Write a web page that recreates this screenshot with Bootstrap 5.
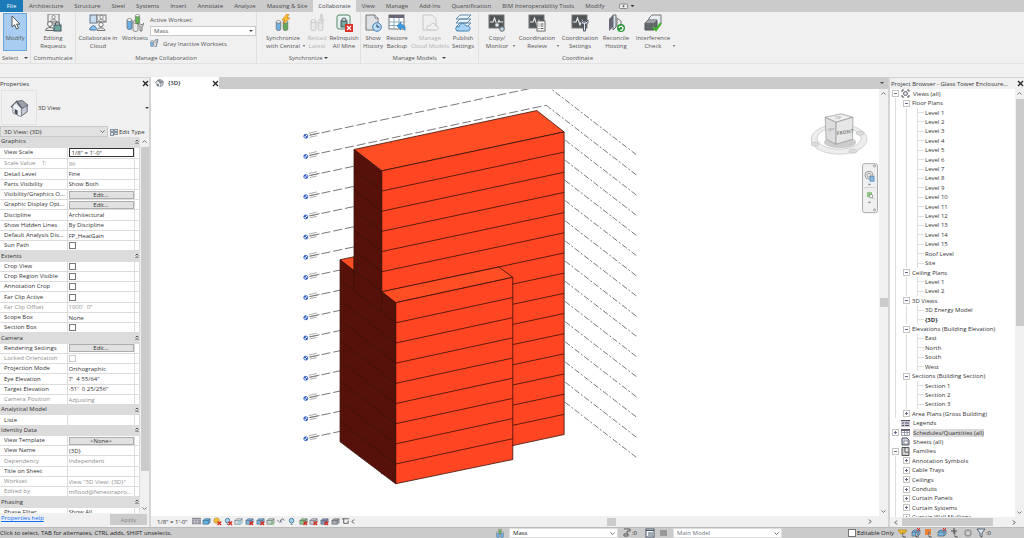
<!DOCTYPE html>
<html lang="en">
<head>
<meta charset="utf-8">
<meta name="viewport" content="width=device-width, initial-scale=1">
<title>Glass Tower Enclosure - 3D View</title>
<link href="https://cdn.jsdelivr.net/npm/bootstrap@5.3.0/dist/css/bootstrap.min.css" rel="stylesheet">
<style>
:root{--bar:#cbcbcb;--face:#f0f0f0;--edge:#d4d4d4;--ink:#333;--mute:#8e8e8e}
body{font-family:"Open Sans","Noto Sans",sans-serif;font-size:6px;line-height:8px;color:var(--ink);background:var(--face);white-space:nowrap}
button,input,select{font:inherit;color:inherit}
button{background:none;border:0;padding:0}
.app{height:100vh;overflow:hidden}
.tabs{background:var(--bar);height:12px;gap:1px}
.tabs button{padding:0 5px;height:12px;color:#4a4a4a}
.tabs .file{background:#1c7ab8;color:#fff;width:23px}
.tabs .on{background:var(--face)}
.ribbon{height:52px;border-bottom:1px solid #e2e2e2}
.grp{border-right:1px solid #e0e0e0;color:#555}
.grp footer{height:10px;line-height:10px;text-align:center}
.tool{height:41px;display:flex;flex-direction:column;align-items:center;padding-top:2px;position:relative;flex:none;white-space:nowrap}
.tool svg{width:18px;height:18px;display:block;margin-bottom:2px}
.tool .drop{position:absolute;right:0;bottom:6px}
.drop{display:inline-block;border:2px solid transparent;border-top-color:#444;border-bottom:0;vertical-align:middle}
.tool .drop{border-width:1px;border-bottom:0;border-top:2px solid #555}
.w-a{width:24px}.w-b{width:30px}.w-c{width:36px}.w-d{width:42px}.w-e{width:44px}
.modify{background:#a9cdf0;border:1px solid #6aa5dc;width:24px;height:38px;margin:1px 3px 2px;padding-top:0}
.ghost{opacity:.4}
.set-box{width:106px;padding:4px 0 0}
.set-box .pick{margin:2px 0 3px}
select{appearance:none;border:1px solid #c9c9c9;border-radius:0;background:#fff;padding:0 3px;height:10px;line-height:8px;width:100%;display:block}
.pick{position:relative}
.pick .drop,.pick .chev{position:absolute;right:3px;top:4px;pointer-events:none}
.chev{width:5px;height:3px;fill:none;stroke:#777;stroke-width:1;display:block}
.head{height:12px;line-height:12px;border-top:1px solid var(--edge);background:var(--face)}
.x{width:7px;height:7px;stroke:#222;stroke-width:1.3;fill:none;display:block}
.left{width:151px;border-right:2px solid var(--edge)}
.type{height:37px}
.type .thumb{width:36px;height:35px;border:1px solid #e2e2e2;margin:1px}
.sel{height:11px}
.sel .pick{width:108px}.sel select{background:#e1e1e1;height:11px}
.sel button{gap:1px;padding-left:2px}
.gridbox{overflow:hidden;background:#fff}
.props{width:140px;height:calc(100% + 5px);table-layout:fixed;border-collapse:collapse;line-height:7px}
.props td,.props th{padding:0 0 0 1px;border-bottom:1px solid #dcdcdc;border-right:1px solid #dcdcdc;overflow:hidden;font-weight:400;height:9px}
.props th[scope=row]{padding-left:4px}
.props .sec th{background:#dcdcdc;padding-left:1px}
.props .off{color:var(--mute)}
.props input[type=text]{border:0;width:100%;height:8px;padding:0;display:block;background:none;outline:0;text-overflow:ellipsis}
.props .boxed input{border:1px solid #333;height:9px;padding-left:2px}
.props .edit{width:100%;height:8px;background:#e1e1e1;border:1px solid #adadad;line-height:6px;display:block}
input[type=checkbox]{appearance:none;width:7px;height:7px;border:1px solid #777;background:#fff;margin:0;display:block}
input:disabled{border-color:#ccc;color:var(--mute)}
.vbar{width:9px;background:var(--face);display:flex;flex-direction:column;align-items:center;flex:none;padding:3px 0}
.vbar .track{width:8px}
.vbar i,.hbar i{display:block;background:var(--bar)}
.foot{height:14px;padding:1px 2px 1px 1px}
.foot button{width:37px;height:11px;background:#ccc;color:#888}
.viewtabs{height:12px;background:var(--bar)}
.viewtabs .cur{width:68px;background:#fff;font-weight:600}
.canvas{background:#fff;min-width:0;min-height:0}
.canvas svg{width:100%;height:100%;display:block}
.strip{height:11px;background:var(--face)}
.strip>span{padding:0 4px 0 6px}
.strip .ic{width:9px;height:9px;display:block}
.vctl{width:159px;display:flex;justify-content:space-between}
.right{width:136px;border-left:2px solid var(--edge)}
.right .head{padding-left:1px}
.tree{overflow:hidden;background:#fff;min-width:0}
.rows{height:calc(100% + 5px);display:grid;grid-auto-rows:1fr;margin:0;padding:0 0 0 2px;list-style:none}
.rows li{display:flex;align-items:center;min-height:0}
.rows b{font-weight:700}
.g{align-self:stretch;width:11px;flex:none;background:linear-gradient(#ddd,#ddd) 3px 0/1px 100% no-repeat}
.g.h{background:linear-gradient(#ddd,#ddd) 3px 0/1px 100% no-repeat,linear-gradient(#ddd,#ddd) 3px 50%/7px 1px no-repeat}
.pm{width:9px;height:9px;flex:none;display:block;margin-right:3px}
.tw{width:7px;height:7px;flex:none;margin-right:2px}
.hot{background:#d9d9d9}
.hbar{height:10px}
.hbar .bar{width:91px;height:8px}
.status{height:11px;background:var(--bar);border-top:1px solid #bbb;color:#222}
.status .pick{width:109px}
.status select{height:10px;border-color:#ddd}
.status .ic{width:10px;height:10px;display:block}
.tail{width:242px;padding-right:33px}
.tail input{width:8px;height:8px;margin-right:1px}
.stat{display:flex;gap:3px}
</style>
</head>
<body>
<svg width="0" height="0" class="position-absolute" aria-hidden="true"><defs>
<symbol id="cyl" viewBox="0 0 6 12"><path d="M.5 2v8c0 2 5 2 5 0V2" fill="currentColor" stroke="#666" stroke-width=".7"/><ellipse cx="3" cy="2" rx="2.5" ry="1.4" fill="#fff" stroke="#666" stroke-width=".7"/></symbol>
<symbol id="man" viewBox="0 0 10 10"><circle cx="5" cy="3" r="2.4" fill="#fff" stroke="#666"/><path d="M.6 9.5c0-4 8.800-4 8.800 0z" fill="#e6e9ec" stroke="#666"/></symbol>
<symbol id="scr" viewBox="0 0 18 18"><rect x="1" y="1" width="15" height="13" fill="#505558" stroke="#777"/><path d="M2 8h3l1.500-4 2.500 7 2-4.500 1 1.500h3" fill="none" stroke="#eee" stroke-width="1.100"/></symbol>
<symbol id="house" viewBox="0 0 20 20"><path d="M1 9 7 3l4 1 7 3v7l-7 5-8-4V9z" fill="#eef1f4" stroke="#667" stroke-width=".8"/><path d="M7 3 13 2l6 5-6 4-5-5z" fill="#9aa1aa" stroke="#556" stroke-width=".8"/><path d="M1 9l6-6 6 8" fill="none" stroke="#556" stroke-width="1.200"/><path d="M12 11l6-3.500V14l-6 4.500z" fill="#c3cbd4" stroke="#667" stroke-width=".8"/><path d="M5 11l3 1.500V17l-3-1.500z" fill="#444b55"/></symbol>
<symbol id="x" viewBox="0 0 7 7"><path d="M1 1l5 5M6 1 1 6"/></symbol>
<symbol id="chev" viewBox="0 0 5 3"><path d="M.5.5l2 2 2-2"/></symbol>
<symbol id="up" viewBox="0 0 5 3"><path d="M.5 2.500l2-2 2 2"/></symbol>
</defs></svg>
<div class="app d-flex flex-column">
<nav class="tabs d-flex flex-none" aria-label="Ribbon tabs">
<button class="file">File</button><button>Architecture</button><button>Structure</button><button>Steel</button><button>Systems</button><button>Insert</button><button>Annotate</button><button>Analyze</button><button>Massing &amp; Site</button><button class="on">Collaborate</button><button>View</button><button>Manage</button><button>Add-Ins</button><button>Quantification</button><button>BIM Interoperability Tools</button><button>Modify</button>
<button class="d-flex align-items-center ms-1" aria-label="Ribbon display"><svg width="16" height="8" viewBox="0 0 16 8"><rect x=".5" y="2" width="8" height="4.500" rx="1" fill="#eee" stroke="#777" stroke-width=".8"/><circle cx="4.500" cy="4.200" r="1" fill="#555"/><path d="M11.500 3h4l-2 2z" fill="#333"/></svg></button>
</nav>
<div class="ribbon d-flex">
<section class="grp"><button class="tool modify"><svg viewBox="0 0 18 18"><path d="M6 2v11l2.600-2.400L10.500 15l2-.9-1.900-4H14z" fill="#fff" stroke="#555"/></svg><span>Modify</span></button><footer>Select <i class="drop ms-1"></i></footer></section>
<section class="grp" style="width:45px"><button class="tool w-e"><svg viewBox="0 0 18 18"><rect x="4" y="0" width="11" height="9" fill="#eee" stroke="#777"/><use href="#man" x="6" y="1" width="7" height="7"/><use href="#man" x="1" y="7" width="10" height="10"/><rect x="10" y="11" width="7" height="6" fill="#6fa79b" stroke="#456"/><path d="M11.500 11V9q2-2.500 4 0v2" fill="none" stroke="#456"/></svg><span>Editing</span><span>Requests</span></button><footer>Communicate</footer></section>
<section class="grp" style="width:181px"><div class="d-flex"><button class="tool w-e ms-0"><svg viewBox="0 0 18 18"><rect x="1" y="1" width="7" height="8" fill="#c6dcf1" stroke="#678"/><rect x="8" y="1" width="9" height="7" fill="#edf1f4" stroke="#777"/><use href="#man" x="9" y="1" width="7" height="7"/><use href="#man" x="7" y="8" width="10" height="9"/><path d="M1 16c-1-2 1-3 2-3 0-2 3-2 3 0 2 0 2 3 0 3z" fill="#8dc1eb" stroke="#47a"/></svg><span>Collaborate in</span><span>Cloud</span></button>
<button class="tool w-b"><svg viewBox="0 0 18 18"><g color="#69aee5"><use href="#cyl" x="0" y="4" width="7" height="12"/></g><g color="#e8e8e8"><use href="#cyl" x="6" y="6" width="7" height="12"/></g><g color="#5fb54f"><use href="#cyl" x="8" y="0" width="7" height="10"/></g><path d="M12 9c0 2 1 3 2 3v5h2v-5c1 0 2-1 2-3l-1.500 1.500h-1.500z" fill="#ddd" stroke="#555" stroke-width=".7"/></svg><span>Worksets</span></button>
<div class="set-box"><label for="aw" class="d-block">Active Workset:</label><div class="pick"><select id="aw"><option>Mass</option></select><i class="drop"></i></div><button class="d-flex align-items-center gap-1"><svg width="9" height="9" viewBox="0 0 9 9"><g color="#76b6e9"><use href="#cyl" x="0" y="1" width="4" height="7"/></g><g color="#ddd"><use href="#cyl" x="3" y="1" width="4" height="7"/></g><path d="M5 1l3-.5L6 8" fill="none" stroke="#78a"/></svg>Gray Inactive Worksets</button></div></div><footer>Manage Collaboration</footer></section>
<section class="grp" style="width:104px"><div class="d-flex ps-1"><button class="tool w-e"><svg viewBox="0 0 18 18"><g color="#6faee0"><use href="#cyl" x="1" y="6" width="7" height="11"/></g><g color="#61ac55"><use href="#cyl" x="8" y="6" width="7" height="11"/></g><path d="M13 0 8 6h3l-2 4 7-6h-3l2-4z" fill="#ffc12e" stroke="#c67a15" stroke-width=".7"/></svg><span>Synchronize</span><span>with Central</span><i class="drop"></i></button><button class="tool w-a ghost"><svg viewBox="0 0 18 18"><g color="#ddd"><use href="#cyl" x="2" y="5" width="7" height="12"/><use href="#cyl" x="9" y="6" width="7" height="11"/></g><path d="M12 0v5h-2l4 4 3-4h-2V0z" fill="#aaa"/></svg><span>Reload</span><span>Latest</span></button><button class="tool w-b"><svg viewBox="0 0 18 18"><rect x="2" y="1" width="13" height="14" rx="2" fill="#e8f1ef" stroke="#586"/><rect x="6" y="7" width="6" height="6" fill="#6fa79b" stroke="#456"/><path d="M7 7V5q2-2 4 0v2" fill="none" stroke="#456"/><rect x="10" y="10" width="8" height="8" fill="#d92f28"/><path d="M12 12l4 4m0-4-4 4" stroke="#fff" stroke-width="1.300"/></svg><span>Relinquish</span><span>All Mine</span></button></div><footer>Synchronize <i class="drop"></i></footer></section>
<section class="grp" style="width:118px"><div class="d-flex"><button class="tool w-a"><svg viewBox="0 0 18 18"><path d="M2 1h9l3 3v12H2z" fill="#dde1e5" stroke="#777"/><path d="M11 1v3h3" fill="#fff" stroke="#777"/><circle cx="13" cy="13" r="4.300" fill="#b9dcf7" stroke="#3d80b8"/><path d="M13 10.500V13h2.500" fill="none" stroke="#235"/></svg><span>Show</span><span>History</span></button><button class="tool w-a"><svg viewBox="0 0 18 18"><rect x="1" y="1" width="15" height="14" fill="#fff" stroke="#777"/><path d="M1 1h15v3H1z" fill="#667"/><path d="M1 8h15M1 11.500h15M6 4v11M11 4v11" stroke="#8ab"/><path d="M9 12l4-4v2.500q5 0 4 6-1-3-4-3V16z" fill="#3c9be8" stroke="#2674b5" stroke-width=".6"/></svg><span>Restore</span><span>Backup</span></button><button class="tool w-d ghost"><svg viewBox="0 0 18 18"><path d="M2 1h9l4 4v11H2z" fill="#eee" stroke="#888"/><path d="M7 16c-3-3 0-5 2-4 1-4 6-3 6 0 3 0 3 4 0 4z" fill="#eee" stroke="#888"/></svg><span>Manage</span><span>Cloud Models</span></button><button class="tool w-a"><svg viewBox="0 0 18 18"><path d="M6 1h11l-4 4H2zM6 5h11l-4 4H2zM6 9h11l-4 4H2z" fill="#e7f2fb" stroke="#58809f" stroke-width=".9"/><path d="M3 17c-3-3 0-5 2-4 1-5 6-4 7-1 5-1 5 5 2 5z" fill="#a8d3f4" stroke="#4182b5"/></svg><span>Publish</span><span>Settings</span></button></div><footer>Manage Models <i class="drop ms-1"></i></footer></section>
<section class="grp border-0" style="width:197px"><div class="d-flex"><button class="tool w-c"><svg viewBox="0 0 18 18"><use href="#scr"/><circle cx="9" cy="11" r="2.200" fill="#e4ecf2" stroke="#666"/><circle cx="14" cy="15" r="2.300" fill="#b9d7ec" stroke="#666"/></svg><span>Copy/</span><span>Monitor</span><i class="drop"></i></button><button class="tool w-e"><svg viewBox="0 0 18 18"><use href="#scr"/><rect x="9" y="7" width="8" height="10" fill="#fff" stroke="#666"/><path d="M10.500 10h1m1 0h3m-5 2h1m1 0h3m-5 2.500h1m1 0h3" stroke="#555"/></svg><span>Coordination</span><span>Review</span><i class="drop"></i></button><button class="tool w-d"><svg viewBox="0 0 18 18"><use href="#scr"/><path d="M10 6c0 3 1 4 2.500 4v7h2v-7c2 0 3-1 2.500-4l-2 2h-3z" fill="#d8e4ee" stroke="#556"/></svg><span>Coordination</span><span>Settings</span></button><button class="tool w-b"><svg viewBox="0 0 18 18"><path d="M2 5l4-4v12l-4 4z" fill="#667"/><path d="M6 1h3v12l-3 3z" fill="#d5e3ee" stroke="#666"/><path d="M10 4l4 3v8l-4-2z" fill="#eee" stroke="#777"/><circle cx="14" cy="14" r="4" fill="#2f9a3c"/><path d="M12 14a2 2 0 1 1 1 2" fill="none" stroke="#fff" stroke-width="1.200"/></svg><span>Reconcile</span><span>Hosting</span></button><button class="tool w-e"><svg viewBox="0 0 18 18"><path d="M5 4l3-3h9v9l-3 3H5z" fill="#e8eef3" stroke="#777"/><path d="M1 9l3-3h9v7l-3 3H1z" fill="#62686c" stroke="#555"/><path d="M1 9l3-3h9l-3 3z" fill="#9ba2a8"/><path d="M9 13l3 3 5-7" fill="none" stroke="#42b52a" stroke-width="2.200"/></svg><span>Interference</span><span>Check</span><i class="drop"></i></button></div><footer>Coordinate</footer></section>
</div>
<div style="height:13px"></div>
<main class="d-flex flex-grow-1 overflow-hidden">
<aside class="left d-flex flex-column flex-shrink-0">
<div class="head d-flex justify-content-between align-items-center"><span>Properties</span><button aria-label="Close properties"><svg class="x"><use href="#x"/></svg></button></div>
<div class="type d-flex align-items-center"><div class="thumb d-flex align-items-center justify-content-center"><svg width="19" height="20"><use href="#house"/></svg></div><span>3D View</span><i class="drop ms-auto"></i></div>
<div class="sel d-flex"><div class="pick"><select aria-label="View instance"><option>3D View: {3D}</option></select><svg class="chev"><use href="#chev"/></svg></div><button class="d-flex align-items-center"><svg width="8" height="8" viewBox="0 0 8 8"><path d="M.5 1.500h3v2h-3zM4.500 1.500h3v2h-3zM.5 4.500h3v3h-3zM4.500 4.500h3v2h-3z" fill="#dfe8f1" stroke="#567" stroke-width=".7"/></svg>Edit Type</button></div>
<div class="d-flex flex-grow-1 overflow-hidden"><div class="gridbox flex-grow-1"><table class="props"><colgroup><col style="width:67px"><col style="width:67px"><col></colgroup><tbody id="props"></tbody></table></div>
<div class="vbar"><svg class="chev"><use href="#up"/></svg><div class="track flex-grow-1 d-flex flex-column mt-1"><i style="height:90%"></i></div><svg class="chev"><use href="#chev"/></svg></div></div>
<div class="foot d-flex justify-content-between"><a href="#">Properties help</a><button disabled>Apply</button></div>
</aside>
<section class="d-flex flex-column flex-grow-1 overflow-hidden">
<div class="viewtabs d-flex align-items-center justify-content-between"><div class="cur d-flex align-items-center h-100"><svg width="9" height="10" viewBox="0 0 20 20" class="mx-1"><use href="#house"/></svg>{3D}<button class="ms-auto" aria-label="Close view"><svg class="x"><use href="#x"/></svg></button></div><i class="drop me-1"></i></div>
<div class="d-flex flex-grow-1 overflow-hidden"><div class="canvas flex-grow-1"><svg viewBox="151 90 729 425" role="img" aria-label="Mass model">
<g id="levels" fill="none" stroke="#555" stroke-width=".8"></g>
<g stroke="#3a1208" stroke-width=".8" stroke-linejoin="round">
<path fill="#ff4e24" d="M354.300 149.300 537.300 110.300 564.700 131.700 382 170.700z"/>
<path fill="#ff4521" d="M382 170.700 564.700 131.700V434.700L382 474z"/>
<g id="tower" fill="none"></g>
<path fill="#ff4e24" d="M340.300 259.700 354.300 256.700V271z"/>
<path fill="#ff4e24" d="M382 291.700 499.300 267 513.300 277.300 396 302.700z"/>
<path fill="#ff4521" d="M396 302.700 513.300 277.300V459.700L396 484z"/>
<path fill="#56120a" d="M354.300 149.300 382 170.700V291.700L396 302.700V484L340.300 442V259.700L354.300 270.500z"/>
<g id="floors" fill="none"></g><path fill="none" d="M354.300 270V290.500M382 291V312"/>
</g>
<g stroke="#bbb" stroke-width=".6"><ellipse cx="840" cy="139" rx="28" ry="15" fill="#ededed"/><ellipse cx="840" cy="138" rx="22" ry="11" fill="#fff"/><ellipse cx="841" cy="142" rx="16" ry="6" fill="#ccc" stroke="none"/><ellipse cx="816" cy="144" rx="4" ry="2" fill="#ddd"/><ellipse cx="854" cy="151" rx="4" ry="2" fill="#ddd"/><ellipse cx="861" cy="133" rx="4" ry="2" fill="#ddd"/><g stroke="#888"><path d="M826 117 842 113.500 854 117 837 122z" fill="#eee"/><path d="M826 117 837 122V144L827 139z" fill="#ddd"/><path d="M837 122 854 117 853.500 139 837 144z" fill="#e6e6e6"/></g></g>
<text x="838" y="135" font-size="5" font-weight="700" fill="#888" transform="rotate(-9 838 135)">FRONT</text><text x="836" y="119" font-size="3" fill="#888">TOP</text><text x="829" y="131" font-size="3" fill="#888">LEFT</text>
<rect x="863.500" y="163.500" width="15" height="49" rx="2" fill="#f0f0f0" stroke="#aaa"/><g fill="none" stroke="#888" stroke-width=".8"><circle cx="875.500" cy="165.700" r="1"/><circle cx="875.500" cy="209.700" r="1"/><circle cx="870" cy="175" r="4"/><circle cx="870" cy="175" r="2"/><path d="M865 187.500h12" stroke="#ccc"/><path d="M869.500 184h2l-1 1zM869.500 202h2l-1 1z" fill="#888"/><rect x="871" y="176" width="4" height="5" fill="#8abae4" stroke="#5a8ab8"/><rect x="868" y="192" width="5" height="5" fill="#8dc47f" stroke="none"/><circle cx="872" cy="196" r="1.700" fill="#fff"/><path d="M873 197l2 2"/></g>
</svg></div><div class="vbar"><svg class="chev"><use href="#up"/></svg><div class="track flex-grow-1 d-flex align-items-center"><i style="width:8px;height:9px"></i></div><svg class="chev"><use href="#chev"/></svg></div></div>
<div class="strip d-flex align-items-center"><span>1/8" = 1'-0"</span><div id="vctl" class="vctl"></div><svg width="4" height="5" viewBox="0 0 4 5"><path d="M3 .5l-2 2 2 2" fill="none" stroke="#444"/></svg><div class="hbar flex-grow-1 d-flex align-items-center justify-content-center h-100"><i style="width:9px;height:8px"></i></div><svg width="4" height="5" viewBox="0 0 4 5" class="me-3"><path d="M1 .5l2 2-2 2" fill="none" stroke="#444"/></svg></div>
</section>
<aside class="right d-flex flex-column flex-shrink-0">
<div class="head d-flex justify-content-between align-items-center"><span>Project Browser - Glass Tower Enclosure...</span><button aria-label="Close browser"><svg class="x"><use href="#x"/></svg></button></div>
<div class="d-flex flex-grow-1 overflow-hidden"><div class="tree flex-grow-1"><ul class="rows" id="tree"></ul></div><div class="vbar"><svg class="chev"><use href="#up"/></svg><div class="track flex-grow-1 mt-1"><i style="height:55%"></i></div><svg class="chev"><use href="#chev"/></svg></div></div>
<div class="hbar d-flex align-items-center"><svg width="4" height="5" viewBox="0 0 4 5" class="mx-1"><path d="M3 .5l-2 2 2 2" fill="none" stroke="#444"/></svg><i class="bar"></i><svg width="4" height="5" viewBox="0 0 4 5" class="ms-auto me-2"><path d="M1 .5l2 2-2 2" fill="none" stroke="#444"/></svg></div>
</aside>
</main>
<footer class="status d-flex align-items-center">
<span class="me-auto">Click to select, TAB for alternates, CTRL adds, SHIFT unselects.</span>
<svg class="ic me-1" viewBox="0 0 10 10"><g color="#6faee0"><use href="#cyl" x="1" y="3" width="4" height="7"/><use href="#cyl" x="5" y="3" width="4" height="7"/></g><g color="#6fb763"><use href="#cyl" x="3" y="0" width="4" height="6"/></g></svg>
<div class="pick"><select aria-label="Active workset"><option>Mass</option></select><svg class="chev"><use href="#chev"/></svg></div>
<svg class="ic ms-1" viewBox="0 0 10 10"><path d="M2 1h6v2H5v3M2 6h4v2H2z" fill="#ddd" stroke="#555"/></svg><span class="me-1">:0</span>
<svg class="ic ms-1" viewBox="0 0 10 10"><rect x="1" y="1" width="8" height="8" fill="#fff" stroke="#456"/><path d="M1 2.500h8M3 5h5M3 7h5" stroke="#456"/></svg><svg class="ic mx-1" viewBox="0 0 10 10"><rect x="1" y="2" width="7" height="6" fill="#999"/></svg>
<div class="pick"><select disabled aria-label="Design option" class="text-secondary"><option>Main Model</option></select><svg class="chev"><use href="#chev"/></svg></div>
<div class="tail d-flex align-items-center justify-content-end"><input type="checkbox" id="eo"><label for="eo" class="me-1">Editable Only</label><span id="stat" class="stat"></span><span>:0</span></div>
</footer>
</div>
<script src="https://cdn.jsdelivr.net/npm/bootstrap@5.3.0/dist/js/bootstrap.bundle.min.js"></script>
<script>
const $ = id => document.getElementById(id);

// Property grid: "#" section, kinds: t text, b boxed text, e button, c checkbox; "-" marks read-only
const P = [['#','Graphics'],['b','View Scale','1/8" = 1\'-0"'],['-t','Scale Value    1:','96'],['t','Detail Level','Fine'],['t','Parts Visibility','Show Both'],['e','Visibility/Graphics O...','Edit...'],['e','Graphic Display Opt...','Edit...'],['t','Discipline','Architectural'],['t','Show Hidden Lines','By Discipline'],['t','Default Analysis Dis...','FP_HeatGain'],['c','Sun Path'],['#','Extents'],['c','Crop View'],['c','Crop Region Visible'],['c','Annotation Crop'],['c','Far Clip Active'],['-t','Far Clip Offset','1000\'  0"'],['t','Scope Box','None'],['c','Section Box'],['#','Camera'],['e','Rendering Settings','Edit...'],['-c','Locked Orientation'],['t','Projection Mode','Orthographic'],['t','Eye Elevation','7\'  4 55/64"'],['t','Target Elevation','-51\'  0 25/256"'],['-t','Camera Position','Adjusting'],['#','Analytical Model'],['t','Liste',''],['#','Identity Data'],['e','View Template','<None>'],['t','View Name','{3D}'],['-t','Dependency','Independent'],['t','Title on Sheet',''],['-t','Workset','View "3D View: {3D}"'],['-t','Edited by','mflood@fenestrapro...'],['#','Phasing'],['t','Phase Filter','Show All']];
const esc = s => s.replace(/&/g,'&amp;').replace(/</g,'&lt;').replace(/"/g,'&quot;');
$('props').innerHTML = P.map(([k,n,v='']) => {
  if (k === '#') return `<tr class="sec"><th colspan="2" class="border-end-0">${n}</th><th><svg width="4" height="6" viewBox="0 0 4 6" style="display:block"><path d="M.5 2.500 2 1l1.500 1.500M.5 5 2 3.500 3.500 5" fill="none" stroke="#333" stroke-width=".8"/></svg></th></tr>`;
  const off = k[0] === '-', t = off ? k[1] : k, d = off ? 'disabled' : '', id = 'p-' + n.replace(/\W+/g,'');
  const c = t === 'e' ? `<button class="edit" id="${id}">${esc(v)}</button>` : t === 'c' ? `<input type="checkbox" id="${id}" ${d}>` : `<input type="text" id="${id}" value="${esc(v)}" ${d}>`;
  return `<tr class="${off?'off':''}"><th scope="row"><label for="${id}" style="white-space:pre">${n}</label></th><td class="${t==='b'?'boxed':''}">${c}</td><td></td></tr>`;
}).join('');

// Project browser tree: depth, state (+ closed, - open, blank leaf), label, icon
const lv = [...Array(15)].map((_,i) => [2,'','Level '+(i+1)]);
const T = [[0,'-','Views (all)','v'],[1,'-','Floor Plans'],...lv,[2,'','Roof Level'],[2,'','Site'],[1,'-','Ceiling Plans'],[2,'','Level 1'],[2,'','Level 2'],[1,'-','3D Views'],[2,'','3D Energy Model'],[2,'','<b>{3D}</b>'],[1,'-','Elevations (Building Elevation)'],[2,'','East'],[2,'','North'],[2,'','South'],[2,'','West'],[1,'-','Sections (Building Section)'],[2,'','Section 1'],[2,'','Section 2'],[2,'','Section 3'],[1,'+','Area Plans (Gross Building)'],[0,'','Legends','l'],[0,'+','<span class="hot">Schedules/Quantities (all)</span>','s'],[0,'','Sheets (all)','h'],[0,'-','Families','f'],...['Annotation Symbols','Cable Trays','Ceilings','Conduits','Curtain Panels','Curtain Systems','Curtain Wall Mullions'].map(n => [1,'+',n])];
const tw = s => `<svg class="tw" viewBox="0 0 7 7"><rect x=".5" y=".5" width="6" height="6" fill="#fff" stroke="#c4c4c4"/><path d="M2 3.500h3${s==='+'?'M3.500 2v3':''}" stroke="#668"/></svg>`;
const ic = {v:'<path d="M1 3V1h2M6 1h2v2M8 6v2H6M3 8H1V6" fill="none" stroke="#555"/><circle cx="4.500" cy="4.500" r="2" fill="#ddd" stroke="#667"/>',l:'<path d="M0 1h9v7H0z" fill="#ccd"/><path d="M0 1.500h9M1 4h2M4 4h4M1 6.500h2M4 6.500h4" stroke="#556"/>',s:'<path d="M.5 1.500h8v6h-8zM.5 4.500h8M3.500 2v6M6 2v6" fill="#fff" stroke="#889" stroke-width=".8"/><path d="M0 1h9v2H0z" fill="#667"/>',h:'<path d="M1 1h5l2 2v5H1z" fill="#c6d2dc" stroke="#556"/><path d="M3 4h4v3H3z" fill="#fff" stroke="#667" stroke-width=".6"/>',f:'<path d="M1 .5h7v8H1z" fill="#ccc" stroke="#555"/><path d="M4 1v4h4" fill="#fff" stroke="#555"/>'};
$('tree').innerHTML = T.map(([d,s,n,i]) => '<li>' + (d ? '<span class="g"></span>' : '') + (d===2 ? '<span class="g"></span><span class="g h"></span>' : s ? tw(s) : '<span class="tw"></span>') + (i ? `<svg class="pm" viewBox="0 0 9 9">${ic[i]}</svg>` : '') + n + '</li>').join('');

// Level lines, their heads, and the floor edges of both masses
const F = 20.2; let L = '', A = '', B = '';
for (let k = 0; k < 16; k++) {
  const y = k*F, m = 136 + y;
  L += `<path stroke-dasharray="9 3" d="M310 ${135+y}L546.700 ${84.8+y}"/><path stroke-dasharray="6 2 2 2" d="M546.700 ${84.8+y}L638 ${155.3+y}"/><circle cx="306" cy="${m}" r="2" fill="#fff" stroke="#2458c8"/><path d="M304 ${m}a2 2 0 0 1 2-2v4a2 2 0 0 0 2-2z" fill="#1d4fc0" stroke="none"/><path stroke="#777" stroke-width=".6" d="M309 ${m-3}l8-1.800M309 ${m-1}l11-2.300M310 ${m+1}l7-1.500"/>`;
  if (k && k < 15) A += `<path d="M382 ${170.7+y}L564.700 ${131.7+y}"/>`;
  if (k && k < 6) B += `<path d="M354.300 ${149.3+y}L382 ${170.7+y}"/>`;
  if (k && k < 9) B += `<path d="M340.300 ${259.7+y}L396 ${302.7+y}L513.300 ${277.3+y}"/>`;
}
B += '<path d="M354.300 270.500L382 291.700"/>';
$('levels').innerHTML = L; $('tower').innerHTML = A; $('floors').innerHTML = B;

// View control bar and selection toggles
const red = '<path d="M5 5l4 4M9 5 5 9" stroke="#d62d20" stroke-width="1.500"/>', cube = c => `<path d="M1 4l2-2h6v4L7 8H1zM1 4h6v4M7 4l2-2" fill="${c}" stroke="#456" stroke-width=".6"/>`;
const sun = '<circle cx="4" cy="4" r="3" fill="#f6c23c" stroke="#a70" stroke-width=".6"/>', bulb = '<circle cx="4" cy="4" r="2.500" fill="#a9d5f5" stroke="#479"/><path d="M3 8h2" stroke="#456"/>';
const V = ['<path d="M0 1h10v7H0z" fill="#889"/><path d="M0 3h10M0 5.500h10M3 3v5M6 3v5" stroke="#ddd" stroke-width=".7"/>',cube('#5fb4ea'),sun+red,bulb+red,cube('#e6e6e6')+'<circle cx="6" cy="6" r="2" fill="#9cd"/>',cube('#7bb7e2')+red,cube('#7bb7e2')+red,cube('#cdc')+'<circle cx="7" cy="7" r="2" fill="#8b8"/>','<path d="M0 3l3 3 2-2M5 6a2 2 0 1 1 3-2" fill="none" stroke="#567"/>',bulb,cube('#8fcf87')+red,cube('#ccc')+red,cube('#89b')+red,cube('#aaa'),'<path d="M1 2h8M3 2v5h5V4" fill="none" stroke="#555"/>'];
$('vctl').innerHTML = V.map(p => `<svg class="ic" viewBox="0 0 10 10">${p}</svg>`).join('');
const cur = '<path d="M5 4v5l1.500-1 1 2" fill="#fff" stroke="#444" stroke-width=".8"/>';
const S = ['<path d="M0 2h9L6 6H3z" fill="#f1bd2e" stroke="#a70" stroke-width=".6"/>'+cur,cube('#7bb7e2')+'<path d="M6 0l3 3M9 0 6 3" stroke="#d22"/>'+cur,'<path d="M1 1h6v6H1z" fill="#e8823a"/>'+cur,cube('#7bb7e2')+'<path d="M6 0l3 3M9 0 6 3" stroke="#d22"/>','<path d="M1 3h6M4 0v6" stroke="#444"/>'+cur,'<circle cx="5" cy="5" r="3" fill="none" stroke="#999" stroke-width="1.500"/>','<path d="M1 1h8L6 5v4L4 8V5z" fill="#dde6ee" stroke="#345" stroke-width=".8"/>'];
$('stat').innerHTML = S.map(p => `<svg class="ic" viewBox="0 0 10 10">${p}</svg>`).join('');
</script>
</body>
</html>
